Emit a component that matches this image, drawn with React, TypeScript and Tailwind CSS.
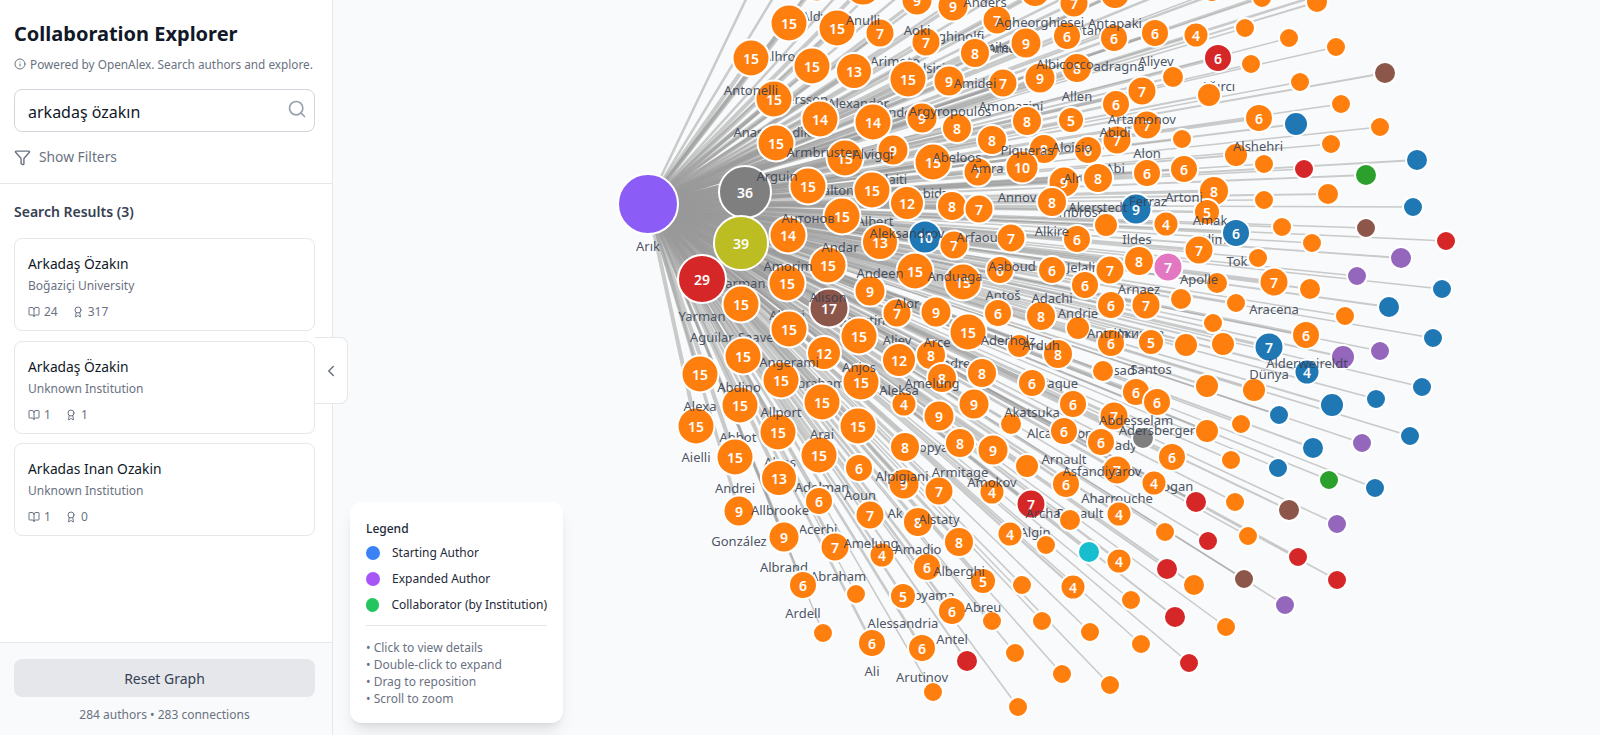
import { Award, BookOpen, ChevronLeft, Filter, Info, Search } from "lucide-react"

const COLORS: Record<string, string> = {
  o: "#ff7f0e",
  b: "#1f77b4",
  r: "#d62728",
  n: "#8c564b",
  p: "#9467bd",
  g: "#2ca02c",
  k: "#e377c2",
  y: "#7f7f7f",
  l: "#bcbd22",
  c: "#17becf",
}

const RADIUS: Record<number, number> = {
  39: 27, 36: 26, 29: 24, 17: 19.5, 15: 18.5, 14: 18.5, 13: 18, 12: 17, 10: 16.5,
  9: 15.5, 8: 15, 7: 14.5, 6: 14, 5: 13, 4: 12.5,
}

// authors without a count on the node: x, y, r, colour
const plain: [number, number, number, string?][] = [
  [1212, -8, 10], [1262, -2, 10], [1317, 2, 11], [1245, 28, 10], [1289, 38, 10], [1336, 47, 10],
  [1251, 64, 10], [1385, 73, 11, "n"], [1173, 77, 11], [1209, 95, 12], [1300, 82, 10], [1341, 104, 10],
  [1296, 124, 12, "b"], [1380, 127, 10], [1182, 139, 10], [1331, 144, 10], [1236, 155, 12], [1264, 164, 10],
  [1304, 169, 10, "r"], [1417, 160, 11, "b"], [1366, 175, 11, "g"], [1328, 194, 11], [1264, 200, 10],
  [1413, 207, 10, "b"], [1106, 225, 12], [1282, 227, 10], [1366, 228, 10, "n"], [1312, 243, 10], [1446, 241, 10, "r"],
  [1258, 258, 10], [1401, 258, 11, "p"], [1357, 276, 10, "p"], [1442, 289, 10, "b"], [1217, 283, 11], [1310, 289, 11],
  [1181, 299, 11], [1236, 303, 10], [1389, 307, 11, "b"], [1345, 316, 10], [1078, 328, 12], [1213, 323, 10],
  [1433, 338, 10, "b"], [1186, 345, 12], [1223, 344, 12], [1343, 357, 12, "p"], [1380, 351, 10, "p"], [1019, 346, 12],
  [1103, 371, 11], [1207, 386, 12], [1254, 390, 12], [1422, 387, 10, "b"], [1376, 399, 10, "b"], [1332, 405, 12, "b"],
  [1279, 415, 10, "b"], [1241, 424, 10], [1011, 424, 11], [1207, 431, 12], [1410, 436, 10, "b"], [1362, 443, 10, "p"],
  [1143, 438, 11, "y"], [1313, 448, 11, "b"], [1231, 460, 10], [1278, 468, 10, "b"], [1027, 466, 12], [1329, 480, 10, "g"],
  [1375, 488, 10, "b"], [1196, 502, 11, "r"], [1235, 502, 10], [1289, 510, 11, "n"], [1337, 524, 10, "p"], [1070, 520, 11],
  [1165, 532, 10], [1208, 541, 10, "r"], [1248, 536, 10], [1089, 552, 11, "c"], [1167, 569, 11, "r"], [1298, 557, 10, "r"],
  [1244, 579, 10, "n"], [1194, 585, 11], [1337, 580, 10, "r"], [1285, 605, 10, "p"], [1131, 600, 10], [1175, 617, 11, "r"],
  [1226, 627, 10], [1090, 632, 10], [1141, 644, 10], [1189, 663, 10, "r"], [1062, 674, 10], [1110, 685, 10],
  [1046, 545, 10], [856, 594, 10], [1022, 585, 10], [992, 621, 10], [1042, 621, 10], [823, 633, 10], [1015, 653, 10],
  [967, 661, 11, "r"], [933, 692, 10], [1018, 707, 10],
]

// authors with a count: x, y, count, colour
const counted: [number, number, number, string?][] = [
  [817, -17, 15], [863, -13, 15], [917, 0, 9], [953, 6, 9], [997, 20, 7], [1035, -8, 8], [1074, 3, 7], [1115, -6, 8],
  [1196, 35, 4], [1155, 33, 6], [1114, 38, 6], [1067, 36, 6], [1026, 43, 9], [1218, 58, 6, "r"],
  [789, 23, 15], [837, 28, 15], [880, 33, 7], [926, 42, 7], [975, 53, 8], [751, 58, 15], [812, 66, 15], [854, 71, 13],
  [908, 79, 15], [949, 81, 9], [1077, 68, 8], [1040, 78, 9], [1003, 83, 7], [774, 99, 15], [1142, 91, 7], [1116, 104, 6],
  [820, 119, 14], [873, 122, 14], [922, 118, 9], [957, 128, 8], [992, 140, 8], [1027, 121, 8], [1071, 120, 5], [1147, 125, 7],
  [1259, 118, 6], [776, 143, 15], [845, 158, 15], [893, 150, 9], [933, 162, 15], [978, 172, 7], [1044, 149, 8], [1088, 150, 6],
  [1117, 140, 7], [1022, 167, 10], [1147, 173, 6], [1184, 169, 6], [1064, 182, 9], [1098, 178, 8], [1214, 191, 8],
  [745, 192, 36, "y"], [808, 186, 15], [872, 190, 15], [907, 203, 12], [952, 206, 8], [979, 209, 7], [1052, 202, 8],
  [1136, 209, 9, "b"], [1207, 212, 5], [1166, 224, 4], [1236, 233, 6, "b"], [842, 216, 15], [788, 235, 14], [880, 242, 13],
  [925, 237, 10, "b"], [954, 245, 7], [1011, 238, 7], [1077, 239, 6], [1199, 250, 7], [741, 243, 39, "l"],
  [702, 279, 29, "r"], [828, 265, 15], [915, 271, 15], [787, 283, 15], [963, 282, 15], [870, 291, 9], [1000, 270, 6],
  [1052, 270, 6], [1110, 270, 7], [1139, 261, 8], [1168, 267, 7, "k"], [1274, 282, 7], [741, 304, 15], [829, 308, 17, "n"],
  [897, 313, 7], [936, 312, 9], [998, 313, 6], [1085, 285, 6], [1111, 305, 6], [1146, 305, 7], [1041, 316, 8], [1306, 335, 6],
  [789, 329, 15], [859, 336, 15], [968, 332, 15], [824, 353, 12], [743, 356, 15], [899, 360, 12], [931, 355, 8], [1111, 343, 6],
  [1151, 342, 5], [1269, 347, 7, "b"], [1058, 354, 8], [1307, 372, 4, "b"], [700, 374, 15], [781, 380, 15], [861, 382, 15],
  [942, 378, 8], [982, 373, 8], [1032, 383, 6], [1136, 392, 6], [1157, 402, 6], [822, 402, 15], [740, 405, 15], [904, 404, 4],
  [939, 416, 9], [974, 404, 9], [1073, 404, 6], [1114, 416, 7], [696, 426, 15], [778, 432, 15], [858, 426, 15], [1064, 431, 6],
  [1101, 442, 6], [905, 447, 8], [960, 443, 8], [993, 450, 9], [735, 457, 15], [819, 455, 15], [859, 468, 6], [1172, 457, 6],
  [779, 478, 13], [1117, 470, 7], [904, 484, 9], [939, 491, 7], [992, 492, 4], [1154, 483, 4], [1066, 484, 6], [1031, 504, 7, "r"],
  [739, 511, 9], [819, 501, 6], [870, 515, 7], [918, 522, 8], [1119, 514, 4], [784, 537, 9], [959, 542, 8], [1010, 534, 4],
  [835, 547, 7], [882, 555, 4], [1119, 561, 4], [927, 567, 6], [983, 581, 5], [1073, 587, 4], [803, 585, 6], [903, 596, 5],
  [952, 611, 6], [872, 643, 6], [922, 648, 6],
]

// text covered by the nodes: x, y, text
const labelsUnder: [number, number, string][] = [
  [818, 16, "Aldye"], [953, 36, "Anghinolfi"], [787, 56, "Alhroob"], [895, 61, "Arimoto"], [997, 47, "Aniles"], [930, 68, "Alsisi"],
  [800, 99, "Åkersson"], [858, 103, "Alexander"], [908, 112, "Anderssy"], [772, 132, "Anastasiadik"], [842, 190, "Aaltonen"],
  [892, 179, "Alaiti"], [935, 193, "Abidze"], [875, 221, "Albert"], [735, 231, "Kim"], [742, 283, "Yarman"], [702, 316, "Yarman"],
  [787, 315, "Aliotti"], [870, 320, "Agostinho"], [742, 337, "Aguilar-Saavedra"], [897, 340, "Aliev"], [952, 363, "Andre"],
  [817, 383, "Abraham"], [738, 437, "Abbot"], [930, 447, "Akopyan"], [780, 462, "Alves"], [822, 487, "Adelman"], [860, 495, "Aoun"],
  [818, 529, "Acerbi"], [895, 513, "Ak"], [784, 567, "Albrand"], [838, 576, "Abraham"], [930, 595, "Aoyama"], [1035, 532, "Algin"],
  [1117, 498, "Aharrouche"], [1080, 513, "Renault"], [1173, 486, "Hogan"], [1120, 445, "Alady"], [1060, 433, "Alcantarop"],
  [1056, 383, "Araque"], [1003, 295, "Antoš"], [1087, 267, "Jelalim"], [1140, 333, "Акимов"], [1120, 370, "Asad"], [1086, 30, "Antam"],
  [1005, 48, "Ames"], [1110, 66, "Quadragna"], [1147, 153, "Alon"], [1115, 168, "Abi"], [1078, 212, "Ambroso"], [1213, 239, "Alim"],
  [1218, 86, "Ağırcı"], [1011, 106, "Amonazini"],
]

const labelsOver: [number, number, string][] = [
  [863, 20, "Anulli"], [917, 30, "Aoki"], [751, 90, "Antonelli"], [950, 111, "Argyropoulos"], [822, 152, "Armbruster"], [873, 154, "Alviggi"],
  [957, 157, "Abeloos"], [987, 168, "Amra"], [777, 176, "Arguin"], [808, 218, "Антонов"], [907, 233, "Aleksandrov"], [977, 237, "Arfaou"],
  [648, 246, "Arık"], [840, 247, "Andar"], [788, 266, "Amorim"], [828, 297, "Alison"], [955, 276, "Anduaga"], [880, 273, "Andeen"],
  [907, 303, "Alor"], [937, 342, "Arce"], [1008, 340, "Aderholz"], [789, 362, "Angerami"], [859, 367, "Anjos"], [932, 383, "Amelung"],
  [899, 390, "Aleksa"], [739, 387, "Abdino"], [700, 406, "Alexa"], [781, 412, "Allport"], [822, 434, "Arai"], [696, 457, "Aielli"],
  [735, 488, "Andrei"], [902, 476, "Alpigiani"], [960, 472, "Armitage"], [992, 482, "Amokov"], [780, 510, "Allbrooke"], [739, 541, "González"],
  [939, 519, "Alstaty"], [871, 543, "Amelung"], [918, 549, "Amadio"], [959, 571, "Alberghi"], [983, 607, "Abreu"], [803, 613, "Ardell"],
  [903, 623, "Alessandria"], [952, 639, "Antel"], [872, 671, "Ali"], [922, 677, "Arutinov"], [1043, 513, "Archa"], [1064, 459, "Arnault"],
  [1102, 471, "Asfandiyarov"], [1136, 420, "Abdesselam"], [1157, 430, "Adersberger"], [1032, 412, "Akatsuka"], [1041, 345, "Arduh"],
  [1052, 298, "Adachi"], [1078, 313, "Andrie"], [1012, 266, "Aaboud"], [1139, 289, "Arnaez"], [1108, 333, "Antrim"], [1237, 261, "Tok"],
  [1199, 279, "Apolle"], [1274, 309, "Aracena"], [1307, 363, "Alderweireldt"], [1269, 374, "Dünya"], [1151, 369, "Santos"],
  [1040, 22, "Agheorghiesei"], [1115, 23, "Antapaki"], [985, 2, "Anders"], [1156, 61, "Aliyev"], [1065, 64, "Albicocco"], [1077, 96, "Allen"],
  [1142, 119, "Artamonov"], [1115, 132, "Abidi"], [1072, 147, "Aloisio"], [1027, 150, "Piqueras"], [1258, 146, "Alshehri"], [1072, 178, "Alr"],
  [1017, 197, "Annov"], [1098, 207, "Akerstedt"], [1148, 201, "Ferraz"], [1184, 197, "Artoni"], [1210, 220, "Amak"], [1137, 239, "Ildes"],
  [1052, 231, "Alkire"], [975, 83, "Amidei"],
]

// collaborators above the visible part of the canvas
const offscreen = [760, 790, 825, 860, 895, 930, 965, 1000, 1040, 1080, 1120, 1170, 1220, 1280, 1340, 1400]

const results = [
  { name: "Arkadaş Özakın", institution: "Boğaziçi University", works: 24, citations: 317 },
  { name: "Arkadaş Özakin", institution: "Unknown Institution", works: 1, citations: 1 },
  { name: "Arkadas Inan Ozakin", institution: "Unknown Institution", works: 1, citations: 0 },
]

function Graph() {
  const hub = { x: 648, y: 204 }
  return (
    <svg width={1600} height={735} viewBox="0 0 1600 735" className="absolute left-[-333px] top-0">
      <g stroke="#999" strokeOpacity={0.5}>
        {offscreen.map((x) => (
          <line key={x} x1={hub.x} y1={hub.y} x2={x} y2={-30} strokeWidth={2.5} />
        ))}
        {plain.map(([x, y, r], i) => (
          <line key={i} x1={hub.x} y1={hub.y} x2={x} y2={y} strokeWidth={r > 10 ? 1.9 : 1.5} />
        ))}
        {counted.map(([x, y, n], i) => (
          <line key={i} x1={hub.x} y1={hub.y} x2={x} y2={y} strokeWidth={Math.min(4, 1.5 + n * 0.2)} />
        ))}
      </g>
      <g fontSize={13} fill="#4b5563" textAnchor="middle" dominantBaseline="central">
        {labelsUnder.map(([x, y, t], i) => (
          <text key={i} x={x} y={y}>{t}</text>
        ))}
      </g>
      <g stroke="#fff" strokeWidth={2}>
        {plain.map(([x, y, r, c], i) => (
          <circle key={i} cx={x} cy={y} r={r} fill={COLORS[c ?? "o"]} />
        ))}
        <circle cx={hub.x} cy={hub.y} r={30} fill="#8b5cf6" />
        {counted.map(([x, y, n, c], i) => (
          <circle key={i} cx={x} cy={y} r={RADIUS[n]} fill={COLORS[c ?? "o"]} />
        ))}
      </g>
      <g fontSize={14} fontWeight={600} fill="#fff" textAnchor="middle" dominantBaseline="central">
        {counted.map(([x, y, n], i) => (
          <text key={i} x={x} y={y}>{n}</text>
        ))}
      </g>
      <g fontSize={13} fill="#374151" fillOpacity={0.9} textAnchor="middle" dominantBaseline="central">
        {labelsOver.map(([x, y, t], i) => (
          <text key={i} x={x} y={y}>{t}</text>
        ))}
      </g>
    </svg>
  )
}

export default function App() {
  return (
    <div className="flex h-screen overflow-hidden bg-[#f9fafb] font-['Noto_Sans',sans-serif] text-gray-900">
      <aside className="relative z-10 flex h-full w-[333px] shrink-0 flex-col border-r border-gray-200 bg-white">
        <div className="border-b border-gray-200 pt-[20px] pr-[17px] pb-[16px] pl-[14px]">
          <h1 className="text-[20px] leading-[28px] font-bold text-[#111827]">Collaboration Explorer</h1>
          <p className="mt-[6px] flex items-center gap-[4px] text-[11.8px] leading-[20px] whitespace-nowrap text-gray-500">
            <Info size={12} />
            Powered by OpenAlex. Search authors and explore.
          </p>
          <div className="relative mt-[15px]">
            <input
              readOnly
              value="arkadaş özakın"
              className="h-[43px] w-full rounded-lg border border-gray-300 bg-white pt-[3px] pr-10 pl-[13px] text-[16px] text-gray-900 outline-none"
            />
            <Search size={20} className="absolute top-[10px] right-[8px] text-gray-400" />
          </div>
          <button className="mt-[15px] flex items-center gap-[8px] text-[13.8px] leading-5 text-gray-500">
            <Filter size={17} />
            Show Filters
          </button>
        </div>

        <div className="flex-1 pt-[18px] pr-[17px] pl-[14px]">
          <h2 className="text-[14px] leading-5 font-semibold text-gray-700">Search Results (3)</h2>
          <div className="mt-[16px] flex flex-col gap-[9.5px]">
            {results.map((r) => (
              <div key={r.name} className="h-[93px] rounded-lg border border-gray-200 bg-white px-[13px] pt-[15px]">
                <div className="text-[13.8px] leading-5 text-gray-900">{r.name}</div>
                <div className="mt-[4px] text-[12px] leading-4 text-gray-500">{r.institution}</div>
                <div className="mt-[10px] flex items-center gap-[14px] text-[12px] leading-4 text-gray-500">
                  <span className="flex items-center gap-[4px]"><BookOpen size={12} />{r.works}</span>
                  <span className="flex items-center gap-[4px]"><Award size={12} />{r.citations}</span>
                </div>
              </div>
            ))}
          </div>
        </div>

        <div className="border-t border-gray-200 bg-[#f9fafb] pt-[16px] pr-[17px] pb-[12px] pl-[14px]">
          <button className="h-[38px] w-full rounded-lg bg-gray-200 text-[14px] text-gray-700">Reset Graph</button>
          <div className="mt-[10px] text-center text-[12px] leading-4 text-gray-500">284 authors • 283 connections</div>
        </div>

        <button className="absolute top-[337px] right-[-16px] flex h-[67px] w-[33px] items-center justify-center rounded-r-lg border border-l-0 border-gray-200 bg-white text-gray-500">
          <ChevronLeft size={18} />
        </button>
      </aside>

      <main className="relative flex-1 overflow-hidden">
        <Graph />
        <div className="absolute bottom-[12px] left-[17px] w-[213px] rounded-xl bg-white pt-[18px] pr-[16px] pb-[16px] pl-[16px] text-[12px] shadow-lg">
          <div className="font-medium text-gray-800">Legend</div>
          <div className="mt-[6px] flex flex-col gap-[8px] text-gray-800">
            <div className="flex items-center gap-[12px]"><span className="h-[14px] w-[14px] rounded-full bg-[#3b82f6]" />Starting Author</div>
            <div className="flex items-center gap-[12px]"><span className="h-[14px] w-[14px] rounded-full bg-[#a855f7]" />Expanded Author</div>
            <div className="flex items-center gap-[12px] whitespace-nowrap"><span className="h-[14px] w-[14px] rounded-full bg-[#22c55e]" />Collaborator (by Institution)</div>
          </div>
          <div className="mt-[11px] border-t border-gray-200 pt-[13px] leading-[17px] text-gray-500">
            <div>• Click to view details</div>
            <div>• Double-click to expand</div>
            <div>• Drag to reposition</div>
            <div>• Scroll to zoom</div>
          </div>
        </div>
      </main>
    </div>
  )
}
